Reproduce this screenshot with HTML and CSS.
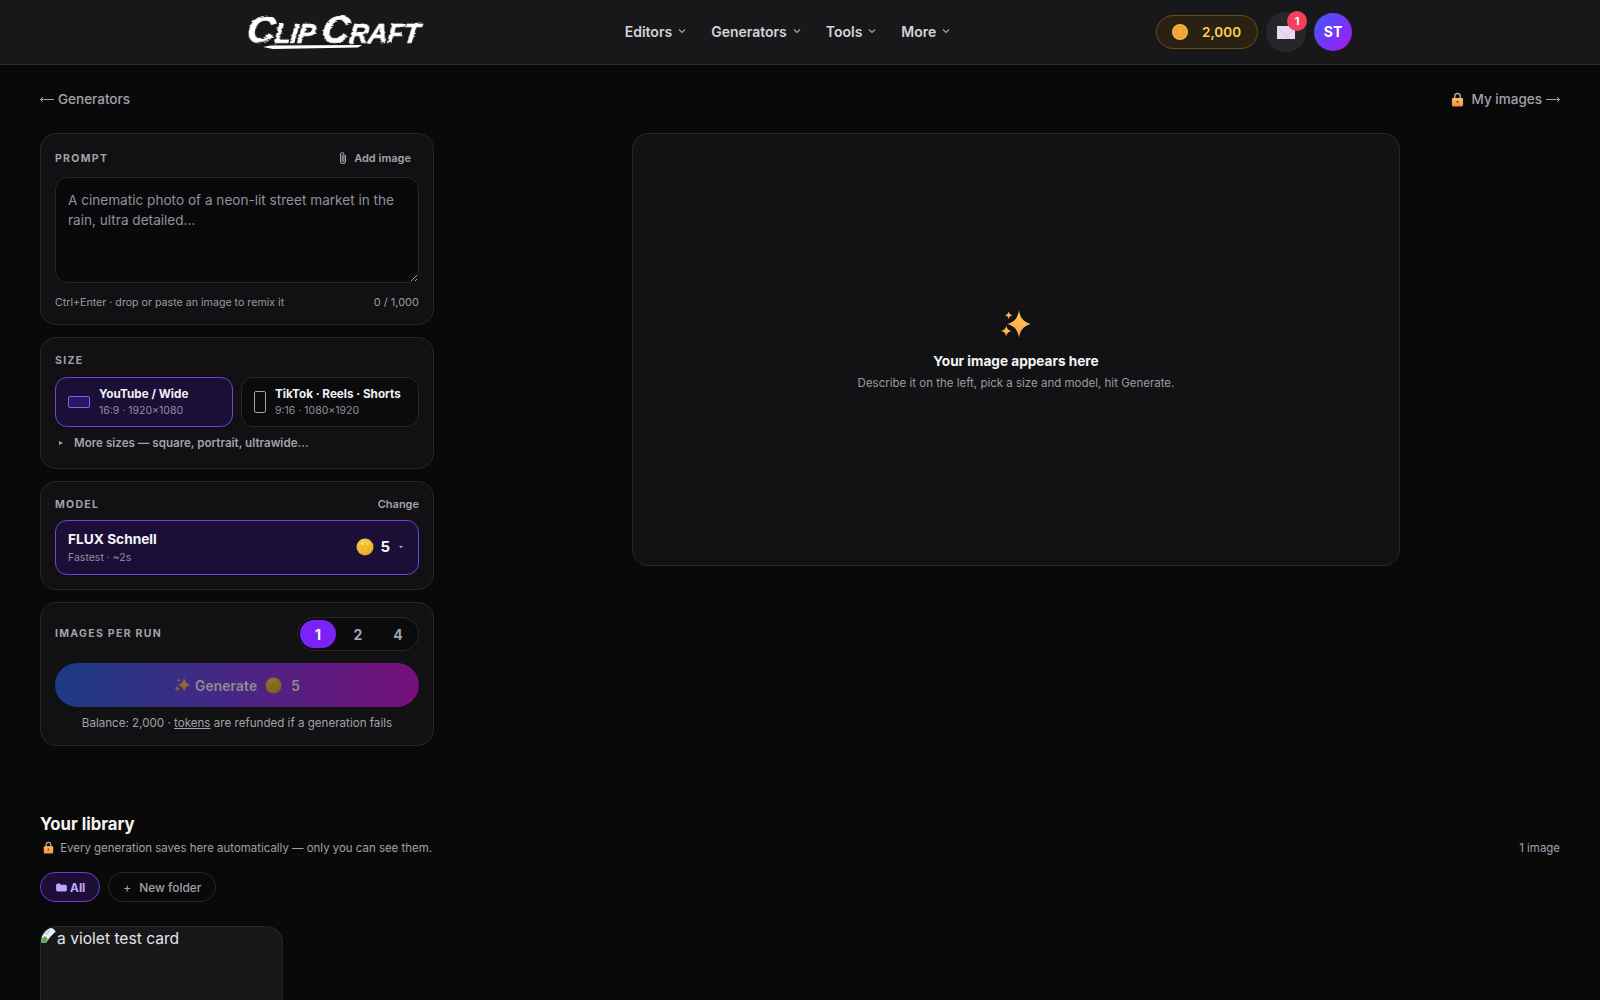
FILE: index.html
```html
<!DOCTYPE html>
<html lang="en">
<head>
    <meta charset="UTF-8">
    <meta name="viewport" content="width=device-width, initial-scale=1.0">
    <title>Clip Craft - Image generator</title>
    <link rel="stylesheet" href="styles.css">
</head>
<body>

    <!-- shared icon defs -->
    <svg class="defs" width="0" height="0" aria-hidden="true">
        <defs>
            <filter id="rough" x="-5%" y="-10%" width="110%" height="120%">
                <feTurbulence type="fractalNoise" baseFrequency="0.08 0.4" numOctaves="2" seed="4" result="n"/>
                <feDisplacementMap in="SourceGraphic" in2="n" scale="3"/>
            </filter>
            <linearGradient id="sparkGrad" x1="0.7" y1="0" x2="0.2" y2="1">
                <stop offset="0" stop-color="#ffcf55"/>
                <stop offset="1" stop-color="#fb9a4e"/>
            </linearGradient>
            <linearGradient id="lockGrad" x1="0" y1="0" x2="0" y2="1">
                <stop offset="0" stop-color="#ffc25a"/>
                <stop offset="1" stop-color="#f58a45"/>
            </linearGradient>
            <radialGradient id="coinGrad" cx="0.45" cy="0.35" r="0.75">
                <stop offset="0" stop-color="#ffe066"/>
                <stop offset="1" stop-color="#e39a10"/>
            </radialGradient>
            <symbol id="sparkles" viewBox="0 0 32 32">
                <path fill="url(#sparkGrad)" d="M19 1.500C20.500 9.500 23.500 12.500 30.500 15 23.500 17.500 20.500 20.500 19 28.500 17.500 20.500 14.500 17.500 7.500 15 14.500 12.500 17.500 9.500 19 1.500z"/>
                <path fill="url(#sparkGrad)" d="M8.700 2.300C9.300 5 10 5.700 12.700 6.300 10 6.900 9.300 7.600 8.700 10.300 8.100 7.600 7.400 6.900 4.700 6.300 7.400 5.700 8.100 5 8.700 2.300z"/>
                <path fill="url(#sparkGrad)" d="M6.300 16.500C7 20 8.300 21.300 11.800 22 8.300 22.700 7 24 6.300 27.500 5.600 24 4.300 22.700.8 22 4.300 21.300 5.600 20 6.300 16.500z"/>
            </symbol>
            <symbol id="lock" viewBox="0 0 14 16">
                <path fill="none" stroke="#a9a9b2" stroke-width="1.600" d="M4 7V4.500a3 3 0 0 1 6 0V7"/>
                <rect x="1" y="6.500" width="12" height="9" rx="1.500" fill="url(#lockGrad)"/>
                <circle cx="7" cy="10.500" r="1.200" fill="#7a4a1c"/>
            </symbol>
            <symbol id="coin" viewBox="0 0 18 18">
                <circle cx="9" cy="9" r="8.500" fill="url(#coinGrad)"/>
                <path fill="#f5bb24" stroke="#e8a816" stroke-width=".6" d="M4.500 7l2.500 1.500L9 5l2 3.500L13.500 7l-1 5.500h-7z"/>
            </symbol>
            <symbol id="chevron" viewBox="0 0 10 10">
                <path fill="none" stroke="currentColor" stroke-width="1.200" d="M2 3.500l3 3 3-3"/>
            </symbol>
            <symbol id="arrow" viewBox="0 0 14 7">
                <path fill="none" stroke="currentColor" stroke-width="1" d="M0 3.500h13.500M11 1.200l2.500 2.300L11 5.800"/>
            </symbol>
        </defs>
    </svg>

    <header class="topbar">
        <div class="topbar-inner">
            <a class="logo" href="#">
                <span class="logo-text"><span class="cap">C</span>LIP <span class="cap">C</span>RAFT</span>
                <span class="logo-stroke"></span>
            </a>

            <nav class="nav">
                <a href="#">Editors <svg class="chev"><use href="#chevron"/></svg></a>
                <a href="#">Generators <svg class="chev"><use href="#chevron"/></svg></a>
                <a href="#">Tools <svg class="chev"><use href="#chevron"/></svg></a>
                <a href="#">More <svg class="chev"><use href="#chevron"/></svg></a>
            </nav>

            <div class="account">
                <a class="balance" href="#">
                    <svg class="balance-coin" viewBox="0 0 16 16">
                        <circle cx="8" cy="8" r="8" fill="#f9b040"/>
                        <circle cx="8" cy="8" r="5.600" fill="none" stroke="#e8932c" stroke-width="1"/>
                        <rect x="5" y="5.500" width="6" height="5" fill="none" stroke="#e8932c" stroke-width=".8"/>
                    </svg>
                    <span>2,000</span>
                </a>
                <button class="mail">
                    <svg class="mail-icon" viewBox="0 0 18 13">
                        <rect width="18" height="13" fill="#e6daf2"/>
                        <path fill="none" stroke="#cbbcd9" stroke-width=".8" d="M0 1l12 12M18 3l-7 5"/>
                    </svg>
                    <span class="mail-badge">1</span>
                </button>
                <div class="avatar">ST</div>
            </div>
        </div>
    </header>

    <main class="page">
        <div class="crumbs">
            <a href="#" class="crumb"><svg class="arrow arrow-back"><use href="#arrow"/></svg> Generators</a>
            <a href="#" class="crumb"><svg class="lock-icon"><use href="#lock"/></svg><span class="crumb-label">My images</span> <svg class="arrow"><use href="#arrow"/></svg></a>
        </div>

        <div class="studio">
            <div class="controls">

                <section class="card">
                    <div class="card-head">
                        <span class="label">PROMPT</span>
                        <button class="add-image">
                            <svg class="clip" viewBox="0 0 10 14"><path fill="none" stroke="#a1a1aa" stroke-width="1.100" d="M7.500 4v6a2.500 2.500 0 0 1-5 0V3.500a1.700 1.700 0 0 1 3.400 0V9.500a.8.8 0 0 1-1.600 0V4"/></svg>
                            Add image
                        </button>
                    </div>
                    <textarea class="prompt" placeholder="A cinematic photo of a neon-lit street market in the rain, ultra detailed…"></textarea>
                    <div class="prompt-foot">
                        <span>Ctrl+Enter · drop or paste an image to remix it</span>
                        <span class="count">0 / 1,000</span>
                    </div>
                </section>

                <section class="card">
                    <div class="card-head size-head">
                        <span class="label">SIZE</span>
                    </div>
                    <div class="sizes">
                        <button class="size size-on">
                            <span class="shape shape-wide"></span>
                            <span class="size-text">
                                <b>YouTube / Wide</b>
                                <small>16:9 · 1920×1080</small>
                            </span>
                        </button>
                        <button class="size">
                            <span class="shape shape-tall"></span>
                            <span class="size-text">
                                <b>TikTok · Reels · Shorts</b>
                                <small>9:16 · 1080×1920</small>
                            </span>
                        </button>
                    </div>
                    <div class="more-sizes"><span class="tri"></span>More sizes — square, portrait, ultrawide…</div>
                </section>

                <section class="card">
                    <div class="card-head model-head">
                        <span class="label">MODEL</span>
                        <a class="change" href="#">Change</a>
                    </div>
                    <button class="model">
                        <span class="model-text">
                            <b>FLUX Schnell</b>
                            <small>Fastest · ~2s</small>
                        </span>
                        <span class="model-cost">
                            <svg class="coin"><use href="#coin"/></svg>
                            <b>5</b>
                            <span class="tri-down"></span>
                        </span>
                    </button>
                </section>

                <section class="card">
                    <div class="run-row">
                        <span class="label">IMAGES PER RUN</span>
                        <div class="stepper">
                            <button class="step step-on">1</button>
                            <button class="step">2</button>
                            <button class="step">4</button>
                        </div>
                    </div>
                    <button class="generate">
                        <svg class="gen-spark"><use href="#sparkles"/></svg>
                        <span>Generate</span>
                        <svg class="coin gen-coin"><use href="#coin"/></svg>
                        <span>5</span>
                    </button>
                    <p class="refund">Balance: 2,000 · <a href="#">tokens</a> are refunded if a generation fails</p>
                </section>
            </div>

            <div class="stage">
                <div class="preview">
                    <svg class="preview-spark"><use href="#sparkles"/></svg>
                    <h3>Your image appears here</h3>
                    <p>Describe it on the left, pick a size and model, hit Generate.</p>
                </div>
            </div>
        </div>

        <section class="library">
            <h2>Your library</h2>
            <div class="library-sub">
                <span><svg class="lock-icon lock-small"><use href="#lock"/></svg> Every generation saves here automatically — only you can see them.</span>
                <span>1 image</span>
            </div>
            <div class="folders">
                <button class="folder folder-on">
                    <svg class="folder-icon" viewBox="0 0 12 10"><path fill="#c4a5fb" d="M0 2.500a2 2 0 0 1 2-2h2L5.200 2H10a2 2 0 0 1 2 2v3.500a2 2 0 0 1-2 2H2a2 2 0 0 1-2-2z"/></svg>
                    All
                </button>
                <button class="folder"><span class="plus">+</span> New folder</button>
            </div>
            <div class="thumb">
                <svg class="broken" viewBox="0 0 16 16">
                    <path fill="#eef1f5" stroke="#aab0b8" stroke-width=".6" d="M.5 10V8a7.500 7.500 0 0 1 12-6l2 2.500L9 10l-4 5.500H.5z"/>
                    <path fill="#c3d9f5" d="M2.500 6.500A5.500 5.500 0 0 1 8 2.500L10 4.500 6 8z"/>
                    <path fill="#5fa845" d="M.5 15.500V12L4 9l3 3-2.500 3.500z"/>
                </svg><span>a violet test card</span>
            </div>
        </section>
    </main>

</body>
</html>
```

FILE: styles.css
```css
* {
    box-sizing: border-box;
}
html, body {
    height: 1000px;
    overflow: hidden;
}
body {
    margin: 0;
    background: #09090a;
    color: #e4e4e7;
    font-family: Inter, "Noto Sans", sans-serif;
}
a {
    color: inherit;
    text-decoration: none;
}
button {
    font-family: inherit;
    cursor: pointer;
}
.defs {
    position: absolute;
}

/* top bar */
.topbar {
    height: 65px;
    background: #18181b;
    border-bottom: 1px solid #2c2c30;
}
.topbar-inner {
    width: 1105px;
    height: 64px;
    margin-left: 247px;
    display: flex;
    align-items: center;
    justify-content: space-between;
}
.logo {
    position: relative;
    width: 173px;
    height: 40px;
    display: block;
    color: #fff;
}
.logo-text {
    display: block;
    font-family: "Liberation Sans", sans-serif;
    font-style: italic;
    font-weight: 700;
    font-size: 27px;
    line-height: 36px;
    white-space: nowrap;
    letter-spacing: -.4px;
    -webkit-text-stroke: .5px #fff;
    transform: skewX(-6deg);
    filter: url(#rough);
}
.logo-text .cap {
    font-size: 39px;
}
.logo-stroke {
    position: absolute;
    left: 16px;
    top: 33px;
    width: 99px;
    height: 4px;
    background: #fff;
    clip-path: polygon(0 50%, 8% 10%, 100% 0, 96% 60%, 10% 100%);
}
.nav {
    display: flex;
    gap: 24px;
    padding-bottom: 2px;
}
.nav a {
    display: flex;
    align-items: center;
    gap: 5px;
    font-size: 14px;
    font-weight: 600;
    color: #d4d4d8;
}
.chev {
    width: 10px;
    height: 10px;
    color: #a1a1aa;
}
.account {
    display: flex;
    align-items: center;
    width: 196px;
}
.balance {
    width: 102px;
    height: 34px;
    display: flex;
    align-items: center;
    gap: 14px;
    padding-left: 15px;
    border: 1px solid #6a4a1e;
    border-radius: 17px;
    background: #2a2113;
    color: #fcd34d;
    font-size: 13.5px;
    font-weight: 600;
}
.balance-coin {
    width: 16px;
    height: 16px;
}
.mail {
    position: relative;
    width: 40px;
    height: 40px;
    margin-left: 8px;
    padding: 0;
    display: flex;
    align-items: center;
    justify-content: center;
    border: none;
    border-radius: 50%;
    background: #27272a;
}
.mail-icon {
    display: block;
    width: 18px;
    height: 13px;
}
.mail-badge {
    position: absolute;
    top: -1px;
    right: -1px;
    width: 20px;
    height: 20px;
    border-radius: 50%;
    background: #f43f5e;
    color: #fff;
    font-size: 11px;
    font-weight: 700;
    line-height: 20px;
    text-align: center;
}
.avatar {
    width: 38px;
    height: 38px;
    margin-left: 8px;
    border-radius: 50%;
    background: linear-gradient(135deg, #3b5bfd, #a815f0);
    color: #fff;
    font-size: 14px;
    font-weight: 700;
    line-height: 38px;
    text-align: center;
}

/* page */
.page {
    padding: 0 40px;
}
.crumbs {
    height: 68px;
    display: flex;
    align-items: center;
    justify-content: space-between;
    font-size: 13.500px;
    font-weight: 500;
    color: #a1a1aa;
}
.crumb {
    display: flex;
    align-items: center;
    gap: 4px;
}
.crumb-label {
    margin-left: 4px;
}
.arrow {
    width: 14px;
    height: 7px;
}
.arrow-back {
    transform: scaleX(-1);
}
.lock-icon {
    width: 13px;
    height: 15px;
    vertical-align: -3px;
}
.lock-small {
    width: 11px;
    height: 13px;
    vertical-align: -2px;
    margin: 0 3px;
}
.studio {
    display: grid;
    grid-template-columns: 394px 1fr;
    column-gap: 38px;
}
.controls {
    display: flex;
    flex-direction: column;
    gap: 12px;
}
.card {
    padding: 14px;
    background: #111113;
    border: 1px solid #27272a;
    border-radius: 16px;
}
.card-head {
    display: flex;
    align-items: center;
    justify-content: space-between;
    height: 20px;
    margin-bottom: 9px;
}
.label {
    font-size: 10.5px;
    font-weight: 700;
    letter-spacing: 1.3px;
    color: #a1a1aa;
}
.add-image {
    display: flex;
    align-items: center;
    gap: 6px;
    padding: 0 8px 0 0;
    border: none;
    background: none;
    color: #a1a1aa;
    font-size: 11px;
    font-weight: 600;
}
.clip {
    width: 10px;
    height: 14px;
}
.prompt {
    display: block;
    width: 100%;
    height: 106px;
    padding: 12px;
    background: #09090b;
    border: 1px solid #27272a;
    border-radius: 12px;
    color: #e4e4e7;
    font-family: inherit;
    font-size: 13.6px;
    line-height: 20px;
    outline: none;
}
.prompt::placeholder {
    color: #92929a;
    opacity: 1;
}
.prompt-foot {
    display: flex;
    justify-content: space-between;
    margin-top: 12px;
    font-size: 10.65px;
    line-height: 15px;
    color: #9a9aa2;
}
.count {
    font-size: 11px;
}

/* size card */
.size-head {
    height: 16px;
    margin-bottom: 9px;
}
.sizes {
    display: grid;
    grid-template-columns: 1fr 1fr;
    gap: 8px;
}
.size {
    height: 50px;
    display: flex;
    align-items: center;
    gap: 9px;
    padding: 0 12px;
    background: #0b0b0d;
    border: 1px solid #27272a;
    border-radius: 12px;
    text-align: left;
}
.size-on {
    background: #1b0f38;
    border-color: #6d45d8;
}
.size-text b {
    display: block;
    font-size: 11.7px;
    font-weight: 700;
    line-height: 15px;
    color: #f1f1f3;
    white-space: nowrap;
}
.size-text small {
    display: block;
    margin-top: 1px;
    font-size: 10.5px;
    line-height: 15px;
    color: #8f8f98;
    white-space: nowrap;
}
.shape {
    flex: none;
    border-radius: 2px;
    border: 1px solid #a1a1aa;
}
.shape-wide {
    width: 22px;
    height: 12px;
    border-color: #8b5cf6;
    background: #2a1560;
}
.shape-tall {
    width: 12px;
    height: 22px;
}
.more-sizes {
    display: flex;
    align-items: center;
    margin: 7px 0 2px;
    font-size: 11.6px;
    font-weight: 600;
    line-height: 18px;
    color: #a1a1aa;
}
.tri {
    width: 0;
    height: 0;
    margin: 0 11px 0 4px;
    border-left: 4px solid #a1a1aa;
    border-top: 2.5px solid transparent;
    border-bottom: 2.5px solid transparent;
}

/* model card */
.model-head {
    height: 16px;
    margin-bottom: 8px;
}
.change {
    font-size: 11px;
    font-weight: 600;
    color: #a1a1aa;
}
.model {
    width: 100%;
    height: 55px;
    display: flex;
    align-items: center;
    justify-content: space-between;
    padding: 0 12px 0;
    background: #1b0f38;
    border: 1px solid #6d45d8;
    border-radius: 12px;
    text-align: left;
}
.model-text {
    padding-bottom: 1px;
}
.model-text b {
    display: block;
    font-size: 13.7px;
    font-weight: 700;
    line-height: 19px;
    color: #f4f4f5;
}
.model-text small {
    display: block;
    margin-top: 1px;
    font-size: 10.5px;
    line-height: 15px;
    color: #8f8f98;
}
.model-cost {
    display: flex;
    align-items: center;
    gap: 6px;
    color: #f4f4f5;
    font-size: 15px;
    margin: 0 3px 2px 0;
}
.coin {
    width: 18px;
    height: 18px;
}
.tri-down {
    width: 0;
    height: 0;
    margin-left: 3px;
    border-top: 2.5px solid #c4c4cc;
    border-left: 2.5px solid transparent;
    border-right: 2.5px solid transparent;
}

/* run card */
.run-row {
    display: flex;
    align-items: center;
    justify-content: space-between;
}
.run-row .label {
    margin-bottom: 2px;
}
.stepper {
    display: flex;
    gap: 4px;
    width: 122px;
    height: 34px;
    padding: 2px;
    background: #0b0b0d;
    border: 1px solid #27272a;
    border-radius: 17px;
}
.step {
    width: 36px;
    padding: 0;
    border: none;
    border-radius: 14px;
    background: none;
    color: #a1a1aa;
    font-size: 14px;
    font-weight: 700;
}
.step-on {
    background: #7b22f8;
    color: #fff;
}
.generate {
    width: 100%;
    height: 44px;
    display: flex;
    align-items: center;
    justify-content: center;
    gap: 4px;
    margin-top: 12px;
    padding: 0;
    border: none;
    border-radius: 22px;
    background: linear-gradient(90deg, #2563eb, #7c3aed 50%, #d40fd8);
    color: #fff;
    font-size: 14px;
    font-weight: 600;
    opacity: .52;
}
.gen-spark {
    width: 17px;
    height: 17px;
}
.gen-coin {
    margin: 0 5px 0 4px;
    width: 17px;
    height: 17px;
}
.refund {
    margin: 8px 0 0;
    font-size: 11.6px;
    line-height: 16px;
    text-align: center;
    color: #a1a1aa;
}
.refund a {
    text-decoration: underline;
}

/* preview */
.stage {
    display: flex;
    justify-content: center;
    align-items: flex-start;
}
.preview {
    width: 768px;
    height: 433px;
    display: flex;
    flex-direction: column;
    align-items: center;
    justify-content: center;
    background: #121214;
    border: 1px solid #27272a;
    border-radius: 16px;
}
.preview-spark {
    width: 32px;
    height: 32px;
}
.preview h3 {
    margin: 10px 0 0;
    font-size: 13.6px;
    font-weight: 700;
    line-height: 20px;
    color: #f4f4f5;
}
.preview p {
    margin: 4px 0 0;
    font-size: 11.5px;
    line-height: 16px;
    color: #9a9aa2;
}

/* library */
.library {
    margin-top: 67px;
}
.library h2 {
    margin: 0;
    font-size: 16.7px;
    font-weight: 700;
    line-height: 22px;
    color: #f4f4f5;
}
.library-sub {
    display: flex;
    justify-content: space-between;
    margin-top: 5px;
    font-size: 11.45px;
    line-height: 16px;
    color: #a1a1aa;
}
.folders {
    display: flex;
    gap: 8px;
    margin-top: 16px;
}
.folder {
    height: 30px;
    display: flex;
    align-items: center;
    gap: 3px;
    padding: 0 14px;
    background: none;
    border: 1px solid #27272a;
    border-radius: 15px;
    color: #a1a1aa;
    font-size: 11.9px;
    font-weight: 500;
}
.folder-on {
    padding: 0 14px 0 15px;
    background: #1b0f38;
    border-color: #6a3fd0;
    color: #c4a5fb;
    font-weight: 700;
}
.folder-icon {
    width: 11px;
    height: 9px;
}
.plus {
    margin-right: 5px;
}
.thumb {
    width: 243px;
    height: 243px;
    margin-top: 24px;
    background: #18181b;
    border: 1px solid #27272a;
    border-radius: 16px;
    font-size: 15.6px;
    line-height: 23px;
    color: #e4e4e7;
    overflow: hidden;
}
.broken {
    width: 16px;
    height: 16px;
    vertical-align: top;
}
```
